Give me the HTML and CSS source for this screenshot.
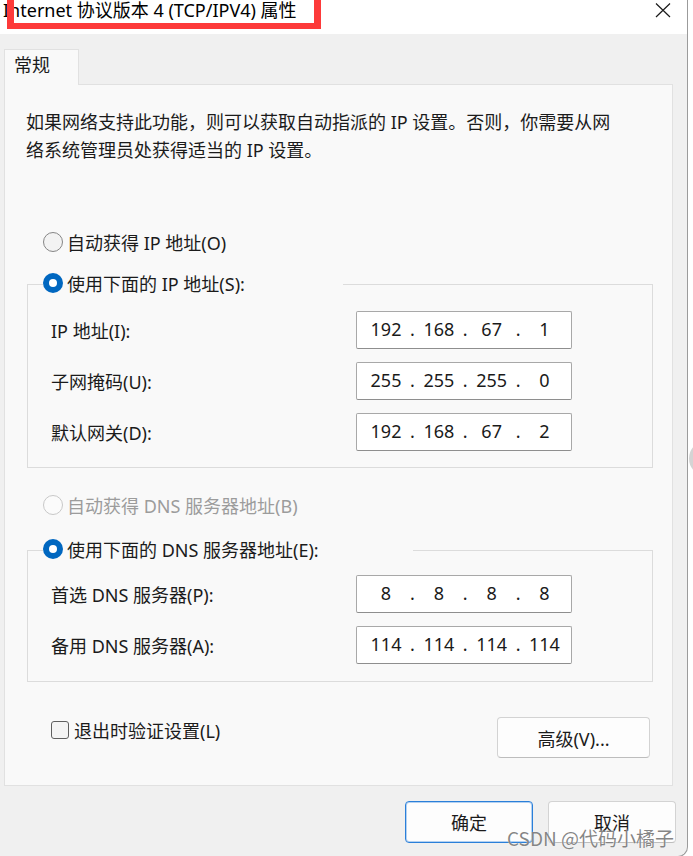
FILE: index.html
```html
<!DOCTYPE html>
<html lang="zh-CN">
<head>
<meta charset="utf-8">
<title>Internet 协议版本 4 (TCP/IPV4) 属性</title>
<link rel="stylesheet" href="styles.css">
</head>
<body>
<div class="screen">
  <div class="window">
    <div class="titlebar">
      <span class="title">Internet 协议版本 4 (TCP/IPV4) 属性</span>
      <svg class="close" viewBox="0 0 16 16" width="16" height="16"><path d="M1 1.5 L15 15 M15 1.5 L1 15" stroke="#1a1a1a" stroke-width="1.2" fill="none"/></svg>
      <div class="annot"></div>
    </div>
    <div class="body">
      <div class="tabs"><div class="tab">常规</div></div>
      <div class="panel">
        <p class="intro">如果网络支持此功能，则可以获取自动指派的 IP 设置。否则，你需要从网<br>络系统管理员处获得适当的 IP 设置。</p>

        <div class="radio-row auto-ip"><span class="radio"></span><span>自动获得 IP 地址(O)</span></div>

        <div class="group group-ip">
          <div class="legend legend-ip"><span class="radio checked"></span><span>使用下面的 IP 地址(S):</span></div>
          <div class="rows">
            <div class="field-row"><span class="label">IP 地址(I):</span>
              <div class="ipbox"><span class="oct">192</span><span class="dot">.</span><span class="oct">168</span><span class="dot">.</span><span class="oct">67</span><span class="dot">.</span><span class="oct">1</span></div></div>
            <div class="field-row"><span class="label">子网掩码(U):</span>
              <div class="ipbox"><span class="oct">255</span><span class="dot">.</span><span class="oct">255</span><span class="dot">.</span><span class="oct">255</span><span class="dot">.</span><span class="oct">0</span></div></div>
            <div class="field-row"><span class="label">默认网关(D):</span>
              <div class="ipbox"><span class="oct">192</span><span class="dot">.</span><span class="oct">168</span><span class="dot">.</span><span class="oct">67</span><span class="dot">.</span><span class="oct">2</span></div></div>
          </div>
        </div>

        <div class="radio-row auto-dns disabled"><span class="radio"></span><span>自动获得 DNS 服务器地址(B)</span></div>

        <div class="group group-dns">
          <div class="legend legend-dns"><span class="radio checked"></span><span>使用下面的 DNS 服务器地址(E):</span></div>
          <div class="rows rows-dns">
            <div class="field-row"><span class="label">首选 DNS 服务器(P):</span>
              <div class="ipbox"><span class="oct">8</span><span class="dot">.</span><span class="oct">8</span><span class="dot">.</span><span class="oct">8</span><span class="dot">.</span><span class="oct">8</span></div></div>
            <div class="field-row"><span class="label">备用 DNS 服务器(A):</span>
              <div class="ipbox"><span class="oct">114</span><span class="dot">.</span><span class="oct">114</span><span class="dot">.</span><span class="oct">114</span><span class="dot">.</span><span class="oct">114</span></div></div>
          </div>
        </div>

        <div class="bottom-row">
          <div class="check"><span class="checkbox"></span><span>退出时验证设置(L)</span></div>
          <button class="btn btn-adv">高级(V)...</button>
        </div>
      </div>
      <div class="actions">
        <button class="btn btn-main primary">确定</button>
        <button class="btn btn-main">取消</button>
      </div>
    </div>
  </div>
  <div class="backdrop"><span class="blob"></span></div>
  <div class="watermark">CSDN @代码小橘子</div>
</div>
</body>
</html>
```

FILE: styles.css
```css
html, body {
  margin: 0;
  padding: 0;
  background: #fff;
}
body {
  font-family: "Noto Sans", "Noto Sans CJK SC", sans-serif;
  font-size: 18px;
  color: #1b1b1b;
}
.screen {
  position: relative;
  display: flex;
  width: 693px;
  height: 856px;
  overflow: hidden;
  background: #fff;
}
.window {
  flex: none;
  width: 688px;
  height: 857px;
  box-sizing: border-box;
  display: flex;
  flex-direction: column;
  border-right: 1px solid #9b9b9b;
  border-bottom: 1px solid #9b9b9b;
  border-bottom-right-radius: 10px;
  overflow: hidden;
  background: #f0f0f0;
}
.titlebar {
  position: relative;
  flex: none;
  height: 34px;
  background: #fff;
  display: flex;
  align-items: flex-start;
}
.title {
  margin-left: 3px;
  line-height: 20px;
  color: #000;
  white-space: nowrap;
}
.close {
  margin-left: auto;
  margin-top: 2px;
  margin-right: 16px;
}
.annot {
  position: absolute;
  left: 7px;
  top: -7px;
  width: 314px;
  height: 36px;
  box-sizing: border-box;
  border: 7px solid #fd3a3a;
  border-bottom-width: 6px;
}
.body {
  flex: 1;
  display: flex;
  flex-direction: column;
}
.tabs {
  padding: 15px 0 0 4px;
  display: flex;
}
.tab {
  position: relative;
  z-index: 1;
  width: 75px;
  height: 36px;
  box-sizing: border-box;
  margin-bottom: -1px;
  padding-left: 9px;
  line-height: 30px;
  background: #f9f9f9;
  border: 1px solid #e1e1e1;
  border-bottom: none;
}
.panel {
  margin-left: 4px;
  width: 669px;
  box-sizing: border-box;
  border: 1px solid #e1e1e1;
  background: #f9f9f9;
  padding: 23px 0 27px 0;
}
.intro {
  margin: 0;
  padding-left: 21px;
  line-height: 28px;
  white-space: nowrap;
}
.radio-row {
  display: flex;
  align-items: center;
  height: 28px;
  padding-left: 38px;
  white-space: nowrap;
}
.auto-ip { margin-top: 64px; }
.auto-dns { margin-top: 23px; }
.disabled { color: #9c9c9c; }

.radio {
  flex: none;
  width: 20px;
  height: 20px;
  box-sizing: border-box;
  border-radius: 50%;
  border: 1.5px solid #868686;
  background: #f3f3f3;
  margin-right: 4px;
  display: flex;
  align-items: center;
  justify-content: center;
}
.disabled .radio {
  border: 1px solid #c8c8c8;
  background: #fbfbfb;
}
.radio.checked {
  border: none;
  background: #0067c0;
}
.radio.checked::after {
  content: "";
  width: 8px;
  height: 8px;
  border-radius: 50%;
  background: #fff;
}

.group {
  margin: 28px 19px 0 22px;
  border: 1px solid #dcdcdc;
  padding-bottom: 16px;
}
.group-dns {
  margin-top: 31px;
  padding-bottom: 17px;
}
.legend {
  margin-top: -14px;
  margin-left: 15px;
  height: 24px;
  display: flex;
  align-items: center;
  background: #f9f9f9;
  white-space: nowrap;
}
.legend-ip { width: 300px; }
.legend-dns { width: 370px; }
.rows {
  margin-top: 16px;
  display: flex;
  flex-direction: column;
  gap: 13px;
}
.rows-dns { margin-top: 14px; }
.field-row {
  display: flex;
  align-items: center;
  height: 38px;
  padding-left: 23px;
}
.label {
  flex: 0 0 305px;
  white-space: nowrap;
}
.ipbox {
  width: 216px;
  height: 38px;
  box-sizing: border-box;
  padding: 0 5px 2px 5px;
  border: 1px solid #a8a8a8;
  border-bottom-color: #8e8e8e;
  border-radius: 2px;
  background: #fff;
  display: flex;
  align-items: center;
  color: #1a1a1a;
}
.oct {
  flex: 0 0 48px;
  text-align: center;
}
.dot {
  flex: 0 0 4px;
  display: flex;
  justify-content: center;
}

.bottom-row {
  margin-top: 35px;
  display: flex;
  align-items: flex-start;
  justify-content: space-between;
  padding: 0 22px 0 46px;
}
.check {
  display: flex;
  align-items: center;
  height: 26px;
  white-space: nowrap;
}
.checkbox {
  width: 18px;
  height: 18px;
  box-sizing: border-box;
  border: 1.5px solid #5f5f5f;
  border-radius: 3px;
  background: #f4f4f4;
  margin-right: 5px;
}
.btn {
  font-family: "Noto Sans", "Noto Sans CJK SC", sans-serif;
  font-size: 18px;
  color: #1b1b1b;
  background: #fdfdfd;
  border: 1px solid #d3d3d3;
  border-bottom-color: #bdbdbd;
  border-radius: 4px;
  padding: 0;
  box-sizing: border-box;
}
.btn-adv {
  width: 153px;
  height: 41px;
}
.actions {
  margin-top: 15px;
  display: flex;
  justify-content: flex-end;
  gap: 15px;
  padding-right: 11px;
}
.btn-main {
  width: 128px;
  height: 42px;
}
.primary {
  border: 1px solid #2a7fd9;
  box-shadow: inset 0 0 0 1px rgba(42, 127, 217, 0.35);
}
.backdrop {
  flex: 1;
  background: #fff;
}
.blob {
  display: block;
  margin-top: 442px;
  margin-left: 1px;
  width: 30px;
  height: 33px;
  border-radius: 50%;
  background: #d4d4d4;
}
.watermark {
  position: absolute;
  left: 507px;
  top: 825px;
  font-family: "Noto Sans CJK SC", sans-serif;
  font-size: 19px;
  line-height: 26px;
  color: rgba(100, 100, 100, 0.78);
  text-shadow: 0 0 1px #fff;
  white-space: nowrap;
}
```
